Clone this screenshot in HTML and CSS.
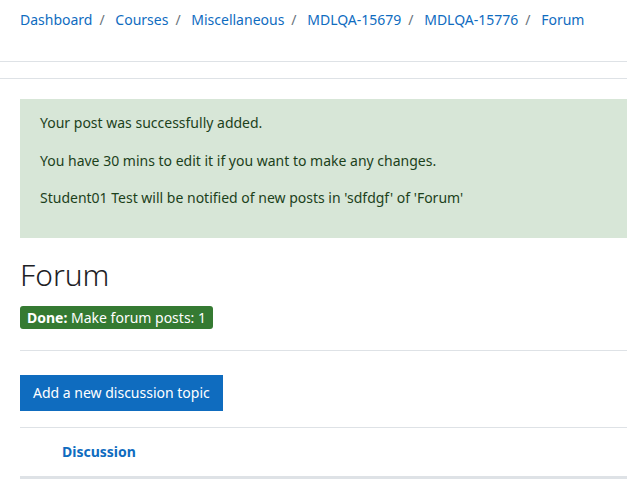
FILE: index.html
```html
<!DOCTYPE html>
<html lang="en">
<head>
  <meta charset="UTF-8" />
  <title>Forum</title>
  <link rel="stylesheet" href="styles.css">
</head>
<body>

  <div class="breadcrumb-bar">
    <nav class="breadcrumb">
      <a href="#">Dashboard</a><span class="sep">/</span>
      <a href="#">Courses</a><span class="sep">/</span>
      <a href="#">Miscellaneous</a><span class="sep">/</span>
      <a href="#">MDLQA-15679</a><span class="sep">/</span>
      <a href="#">MDLQA-15776</a><span class="sep">/</span>
      <a href="#">Forum</a>
    </nav>
  </div>
  <div class="secondary-nav"></div>

  <div class="main">
    <div class="alert">
      <p>Your post was successfully added.</p>
      <p>You have 30 mins to edit it if you want to make any changes.</p>
      <p>Student01 Test will be notified of new posts in 'sdfdgf' of 'Forum'</p>
    </div>

    <h2 class="page-title">Forum</h2>

    <div class="completion">
      <span class="badge"><strong>Done:</strong> Make forum posts: 1</span>
    </div>

    <div class="actions">
      <button class="btn-primary">Add a new discussion topic</button>
    </div>

    <div class="discussion-head">
      <a href="#">Discussion</a>
    </div>
  </div>

</body>
</html>
```

FILE: styles.css
```css
* {
  box-sizing: border-box;
  margin: 0;
  padding: 0;
}

body {
  font-family: "Noto Sans", "Open Sans", sans-serif;
  font-size: 14px;
  color: #1d2125;
  background: #fff;
  overflow: hidden;
}

a {
  color: #0f6cbf;
  text-decoration: none;
}

.breadcrumb-bar {
  height: 62px;
  padding: 9px 20px 0;
  border-bottom: 1px solid #dee2e6;
}

.breadcrumb {
  line-height: 22px;
  white-space: nowrap;
}

.breadcrumb .sep {
  color: #6a737b;
  margin: 0 7px;
}

.secondary-nav {
  height: 17px;
  border-bottom: 1px solid #dee2e6;
}

.main {
  width: 760px;
  padding: 20px 0 0 20px;
}

.alert {
  background: #d7e6d7;
  color: #1c411b;
  padding: 13px 20px;
  margin-bottom: 19px;
}

.alert p {
  line-height: 22.5px;
  margin-bottom: 15px;
}

.page-title {
  font-size: 30px;
  font-weight: 300;
  line-height: 36px;
  margin-bottom: 13px;
}

.completion {
  padding-bottom: 21px;
  border-bottom: 1px solid #dee2e6;
}

.badge {
  display: inline-block;
  background: #357a32;
  color: #fff;
  border-radius: 3px;
  padding: 0 7px;
  line-height: 23px;
}

.actions {
  padding: 24px 0 16px;
  border-bottom: 1px solid #dee2e6;
}

.btn-primary {
  background: #0f6cbf;
  color: #fff;
  border: none;
  font: inherit;
  height: 36px;
  padding: 0 13px;
  cursor: pointer;
}

.discussion-head {
  height: 51px;
  padding: 0 42px;
  line-height: 47px;
  border-bottom: 3px solid #dee2e6;
  font-weight: bold;
}
```
